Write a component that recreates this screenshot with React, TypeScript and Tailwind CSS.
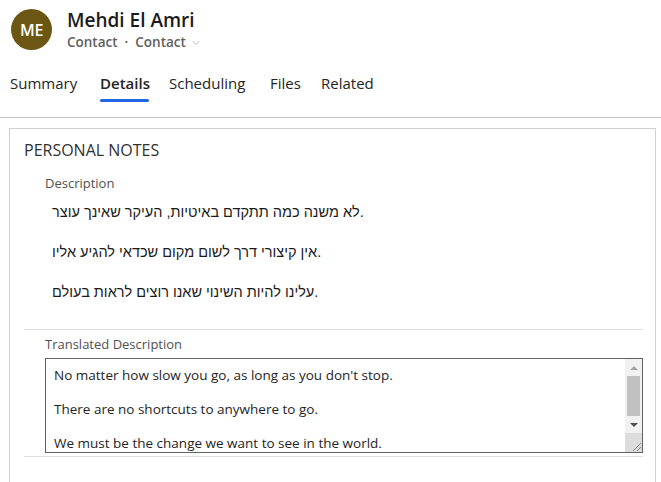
import { ChevronDown } from "lucide-react";

const tabs = [
  { label: "Summary", w: "w-[90px]", active: false },
  { label: "Details", w: "w-[69px]", active: true },
  { label: "Scheduling", w: "w-[101px]", active: false },
  { label: "Files", w: "w-[51px]", active: false },
  { label: "Related", w: "w-[80px]", active: false },
];

const notes = [
  "לא משנה כמה תתקדם באיטיות, העיקר שאינך עוצר.",
  "אין קיצורי דרך לשום מקום שכדאי להגיע אליו.",
  "עלינו להיות השינוי שאנו רוצים לראות בעולם.",
];

const translated = [
  "No matter how slow you go, as long as you don't stop.",
  "There are no shortcuts to anywhere to go.",
  "We must be the change we want to see in the world.",
];

function FakeScrollbar() {
  return (
    <div className="flex h-full w-[17px] flex-col bg-[#f1f1f1]">
      <div className="flex h-[17px] items-center justify-center">
        <div className="h-0 w-0 border-x-[4px] border-b-[4px] border-x-transparent border-b-[#a3a3a3]" />
      </div>
      <div className="mx-[2px] h-[40px] bg-[#c1c1c1]" />
      <div className="flex h-[17px] items-center justify-center">
        <div className="h-0 w-0 border-x-[4px] border-t-[4px] border-x-transparent border-t-[#505050]" />
      </div>
      <div className="relative flex-1 bg-[#dcdcdc]">
        <svg className="absolute bottom-0 right-0" width="12" height="12" viewBox="0 0 12 12">
          <path d="M11 3 L3 11 M11 7 L7 11" stroke="#8a8a8a" strokeWidth="1" />
        </svg>
      </div>
    </div>
  );
}

export default function App() {
  return (
    <div className="h-[482px] w-[661px] overflow-hidden bg-white font-['Open_Sans',sans-serif] text-[#242424]">
      {/* header */}
      <div className="h-[118px] border-b border-[#c6c6c6]">
        <div className="flex items-start pl-[11px] pt-[9px]">
          <div className="flex h-[41px] w-[41px] items-center justify-center rounded-full bg-[#6b5614] text-[16px] font-semibold tracking-tight text-white">
            ME
          </div>
          <div className="ml-[15px] flex flex-col">
            <div className="-mt-[1px] text-[19px] font-semibold leading-[24px] text-[#1b1b1b]">Mehdi El Amri</div>
            <div className="mt-[1px] flex items-center text-[13.5px] font-semibold leading-[18px] text-[#616161]">
              <span>Contact</span>
              <span className="mx-[7px]">·</span>
              <span>Contact</span>
              <ChevronDown size={12} strokeWidth={1.2} className="ml-[4px] mt-[1px] text-[#8a8a8a]" />
            </div>
          </div>
        </div>
        <div className="mt-[21px] flex pl-[10px]">
          {tabs.map((t) => (
            <div key={t.label} className={`${t.w} flex flex-col`}>
              <span
                className={`inline-block self-start text-[15px] leading-[22px] ${t.active ? "font-semibold" : ""}`}
              >
                {t.label}
              </span>
              {t.active && <div className="mt-[5px] h-[3px] w-[49px] rounded-full bg-[#2266e3]" />}
            </div>
          ))}
        </div>
      </div>

      {/* body */}
      <div className="pl-[9px] pr-[5px] pt-[10px]">
        <div className="h-[400px] border border-[#d1d1d1] pl-[14px] pr-[12px] pt-[10px]">
          <div className="text-[16px] leading-[22px] text-[#323130]">PERSONAL NOTES</div>

          <div className="pl-[21px] pt-[13px]">
            <div className="text-[13px] leading-[18px] text-[#505050]">Description</div>
            <div className="mt-[10px] flex flex-col gap-[20px] pl-[7px] font-['Liberation_Sans',sans-serif] text-[14.5px] text-[#1b1b1b]">
              {notes.map((n) => (
                <p key={n} className="leading-[20px]">
                  {n}
                </p>
              ))}
            </div>
          </div>

          <div className="mt-[27px] border-t border-[#e0e0e0] pl-[21px] pt-[5px]">
            <div className="text-[13px] leading-[18px] text-[#505050]">Translated Description</div>
            <div className="mt-[5px] flex h-[95px] border border-[#616161]">
              <div className="flex flex-1 flex-col gap-[17px] overflow-hidden pl-[8px] pt-[8px] text-[13.5px] leading-[17px] text-[#242424]">
                {translated.map((t) => (
                  <p key={t}>{t}</p>
                ))}
              </div>
              <FakeScrollbar />
            </div>
          </div>
          <div className="mt-[3px] border-t border-[#e0e0e0]" />
        </div>
      </div>
    </div>
  );
}
